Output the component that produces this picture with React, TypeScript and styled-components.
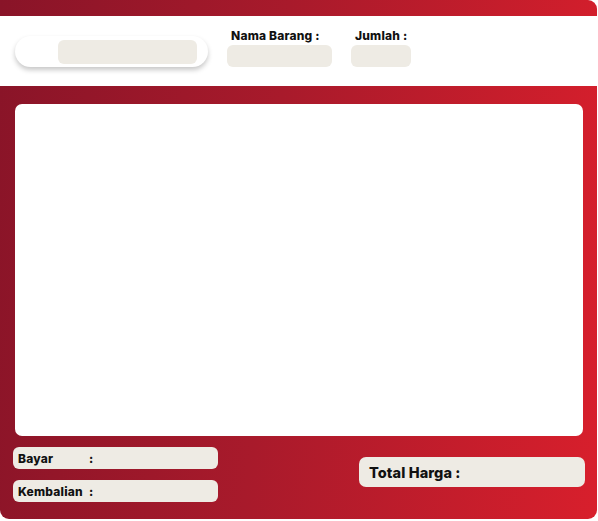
// @ts-nocheck
import styled, { createGlobalStyle } from 'styled-components';

const GlobalStyle = createGlobalStyle`
  html, body {
    margin: 0;
    padding: 0;
    background: #ffffff;
  }
  body {
    font-family: Inter, "Noto Sans", "Liberation Sans", sans-serif;
  }
`;

export default function App() {
  return (
    <>
      <GlobalStyle />
      <Frame>
        <TopStrip />
        <Header>
          <SearchPill>
            <SearchField />
          </SearchPill>
          <Field>
            <FieldLabel>Nama Barang :</FieldLabel>
            <FieldInput $width={105} />
          </Field>
          <Field>
            <FieldLabel>Jumlah :</FieldLabel>
            <FieldInput $width={60} />
          </Field>
        </Header>
        <Body>
          <ListPanel />
          <Footer>
            <PaymentColumn>
              <PayRow>
                <PayLabel>Bayar</PayLabel>
                <Colon>:</Colon>
              </PayRow>
              <PayRow>
                <PayLabel>Kembalian</PayLabel>
                <Colon>:</Colon>
              </PayRow>
            </PaymentColumn>
            <TotalBox>Total Harga :</TotalBox>
          </Footer>
        </Body>
      </Frame>
    </>
  );
}

const Frame = styled.div`
  width: 597px;
  height: 519px;
  display: flex;
  flex-direction: column;
  border-radius: 0 9px 9px 9px;
  overflow: hidden;
  background: linear-gradient(95deg, #891428 0%, #a81a2b 45%, #d81f2c 100%);
`;

const TopStrip = styled.div`
  height: 16px;
  flex-shrink: 0;
`;

const Header = styled.header`
  height: 70px;
  flex-shrink: 0;
  display: flex;
  align-items: flex-start;
  gap: 19px;
  padding: 0 0 0 15px;
  background: #ffffff;
  box-sizing: border-box;
`;

const SearchPill = styled.div`
  margin-top: 20px;
  width: 193px;
  height: 31px;
  box-sizing: border-box;
  padding: 4px 11px 3px 43px;
  border-radius: 16px;
  background: #ffffff;
  box-shadow: 0 3px 5px rgba(0, 0, 0, 0.22);
`;

const SearchField = styled.div`
  height: 24px;
  border-radius: 6px;
  background: #eeebe4;
`;

const Field = styled.div`
  margin-top: 13px;
  display: flex;
  flex-direction: column;
  gap: 3px;
`;

const FieldLabel = styled.div`
  padding-left: 4px;
  font-size: 12px;
  line-height: 13px;
  font-weight: 800;
  color: #111111;
  letter-spacing: 0.2px;
`;

const FieldInput = styled.div`
  width: ${({ $width }) => $width}px;
  height: 22px;
  border-radius: 6px;
  background: #eeebe4;
`;

const Body = styled.main`
  flex: 1;
  display: flex;
  flex-direction: column;
  padding: 18px 14px 0 15px;
`;

const ListPanel = styled.section`
  height: 332px;
  border-radius: 7px;
  background: #ffffff;
`;

const Footer = styled.div`
  margin: 11px -2px 0;
  display: flex;
  justify-content: space-between;
  align-items: flex-start;
`;

const PaymentColumn = styled.div`
  display: flex;
  flex-direction: column;
  gap: 11px;
`;

const PayRow = styled.div`
  width: 205px;
  height: 22px;
  box-sizing: border-box;
  display: flex;
  align-items: center;
  padding-left: 5px;
  border-radius: 6px;
  background: #eeebe4;
  font-size: 12px;
  font-weight: 800;
  letter-spacing: 0.2px;
  color: #111111;
`;

const PayLabel = styled.span`
  width: 71px;
`;

const Colon = styled.span``;

const TotalBox = styled.div`
  margin-top: 10px;
  width: 226px;
  height: 30px;
  box-sizing: border-box;
  display: flex;
  align-items: center;
  padding-left: 10px;
  border-radius: 7px;
  background: #eeebe4;
  font-size: 14.5px;
  font-weight: 800;
  letter-spacing: 0.1px;
  color: #111111;
`;
